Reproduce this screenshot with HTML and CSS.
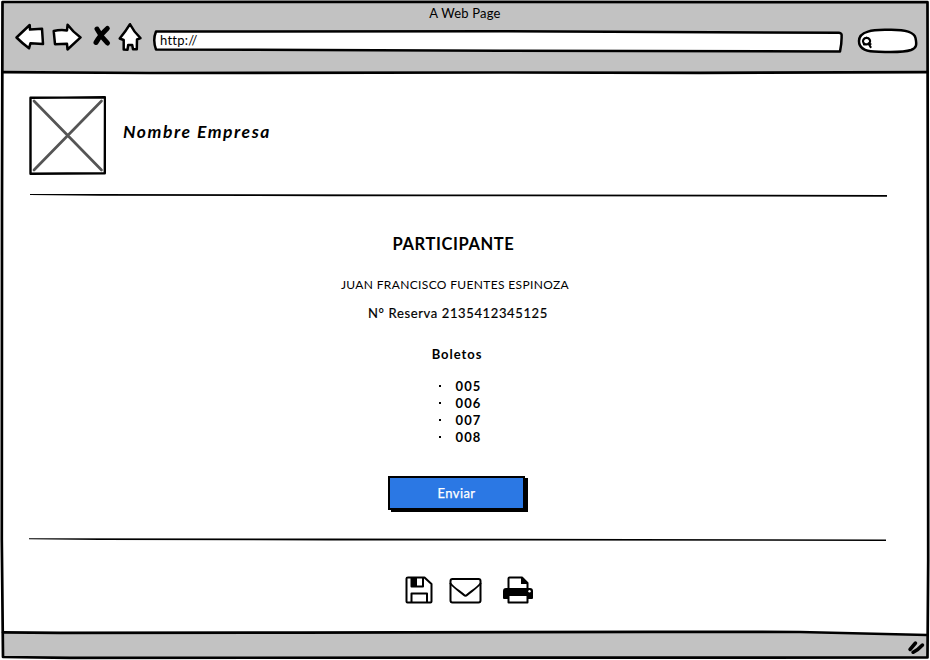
FILE: index.html
```html
<!DOCTYPE html>
<html lang="es">
<head>
<meta charset="utf-8">
<title>A Web Page</title>
<link rel="stylesheet" href="styles.css">
</head>
<body>
<div class="browser">
  <header class="chrome">
    <div class="title"><span>A Web Page</span></div>
    <div class="toolbar">
      <svg class="tool back" width="32" height="32" viewBox="14 22 32 32"><path d="M16.5 37.5 29.7 25 30 29.6 42 28.7 43 44 30.5 43.2 29 48.3Q22 43 16.5 37.5Z"/></svg>
      <svg class="tool forward" width="32" height="32" viewBox="51 22 32 32"><path d="M53.7 31Q60 29.5 67 30.4L67.6 24.7Q73 32 80.6 37.4L67.5 49.5 67 43.8 55 44.2Z"/></svg>
      <svg class="tool stop" width="20" height="32" viewBox="92 22 20 32"><path class="cross" d="M97 29Q101 37 107.5 43M107.3 28.5Q100 35 96 42.5"/></svg>
      <svg class="tool home" width="26" height="32" viewBox="117 22 26 32"><path d="M130 24.2Q134 32 140.5 38.2L137 39.5 136.8 49.2 133 49.2 132.2 45 128.2 45 127.5 49.8 123.7 49.5 123.7 40 119.7 38.5Q126 31 130 24.2Z"/></svg>
      <div class="url">
        <svg class="shape" width="692" height="32" viewBox="152 22 692 32"><path d="M156 31.6 500 31.2 839 32.8Q842 33 841.6 36Q841.8 43 840 51.5L500 50.7 156 49.5Q152.500 40 156 31.600Z"/></svg>
        <span>http://</span>
      </div>
      <svg class="tool search" width="64" height="32" viewBox="855 22 64 32"><path d="M859 41C859 29 879 30.200 889 29.700C901 29.500 914 31 915.500 38C917 45 916.500 48 911 50C902 53 888 52 874 51.500C864 51 859 47 859 41Z"/><path class="lens" d="M866.500 37.900a3.600 3.300 0 1 0 .1 0M868.500 43.500 870.600 47M864 44.400 870.500 44"/></svg>
    </div>
  </header>
  <main class="page">
    <div class="brand">
      <svg class="logo" width="78" height="80" viewBox="28 95 78 80"><path class="box" d="M30.500 97.700 63 97.600 105 97.300 104.800 173.300 30.500 173.700Z"/><path class="diagonals" d="M34 101 101.500 170M101.500 101 34 170"/></svg>
      <h1>Nombre Empresa</h1>
    </div>
    <svg class="rule first" width="858" height="4" viewBox="0 0 858 4"><path d="M0 1 40 1 65 1.100 400 1.500 857 2 857 3.700 300 3.200 70 2.700 0 1.900Z"/></svg>
    <h2>PARTICIPANTE</h2>
    <p class="name">JUAN FRANCISCO FUENTES ESPINOZA</p>
    <p class="booking">N° Reserva 2135412345125</p>
    <h3>Boletos</h3>
    <ul class="tickets">
      <li>005</li>
      <li>006</li>
      <li>007</li>
      <li>008</li>
    </ul>
    <button class="send">Enviar</button>
    <svg class="rule second" width="858" height="4" viewBox="0 0 858 4"><path d="M0 .3 300 .5 857 1.600 857 3 300 2.400 70 1.900 0 1.200Z"/></svg>
    <div class="actions">
      <svg class="save" width="28" height="28" viewBox="0 0 28 28"><path d="M3 1.500H19.500L26.500 8V25.500Q26.500 26.500 25.500 26.500H2.500Q1.500 26.500 1.500 25.500V2.500Q1.500 1.500 3 1.500ZM6.500 1.500V10.500H18V1.500M6.500 26.500V17.500H22V26.500"/><path class="solid" d="M6.500 2H12V10.500H6.500Z"/></svg>
      <svg class="mail" width="33" height="28" viewBox="0 0 33 28"><rect x="1.500" y="3" width="30" height="23.500" rx="2"/><path d="M1.500 7.500C5 12 12 16 15 19Q16.500 20.500 18 19C21 16 28 12 31.500 7.500"/></svg>
      <svg class="print" width="30" height="28" viewBox="0 0 30 28"><path class="solid" d="M3 12H27Q30 12 30 15V22Q30 23 29 23H25V20H5V23H1Q0 23 0 22V15Q0 12 3 12Z"/><path d="M5.500 13V2.500Q5.500 1.500 6.500 1.500H19L24.500 7V13M5.500 20V26.500H24.500V20"/><path class="solid" d="M18 1V8H25Z"/><circle class="light" cx="26.500" cy="15.300" r="1.200"/></svg>
    </div>
  </main>
  <footer class="status"></footer>
  <svg class="frame" width="930" height="660" viewBox="0 0 930 660">
    <path class="outside" d="M0 0H930V660H0ZM2 1.500V657L927.500 657.500V1.500Z"/>
    <path class="bar" d="M2 632.500 300 632.500 650 631.800 840 632.500 927 635V657H2Z"/>
    <path class="line" d="M2.500 2Q200 2.500 500 1.800L927.500 2.200 928 300 928.200 560 927.500 657.500 700 657.600Q300 656.500 70 657.800L3 657 1.800 540 2 200Z"/>
    <path class="line" d="M3 72.200 150 73 500 72.500 700 72.800 927 72.200M3 632.300 60 632.800 300 632.600 650 631.800 800 632 927 635"/>
    <path class="grip" d="M910 649.500 915.500 643M913 652.300Q918 650 922.500 645"/>
  </svg>
</div>
</body>
</html>
```
FILE: styles.css
```css
* { box-sizing: border-box; }
body {
  margin: 0;
  background: #fff;
  color: #000;
  font-family: Lato, "Open Sans", sans-serif;
}
h1, h2, h3, p, ul { margin: 0; padding: 0; }
svg { display: block; flex: none; fill: none; stroke: #000; stroke-linejoin: round; stroke-linecap: round; }
.browser {
  position: relative;
  display: flex;
  flex-direction: column;
  width: 930px;
  height: 660px;
  overflow: hidden;
}
.chrome { flex: none; height: 72px; background: #c2c2c2; }
.title {
  height: 22px;
  padding-top: 5px;
  text-align: center;
  font-size: 13px;
  line-height: 16px;
  letter-spacing: .2px;
}
.toolbar { display: flex; padding-left: 14px; }
.tool, .shape { fill: #fff; stroke-width: 2.5; }
.forward { margin-left: 5px; }
.stop { margin-left: 9px; }
.stop .cross { fill: none; stroke-width: 5; }
.home { margin-left: 5px; }
.url { display: grid; margin-left: 9px; }
.url > * { grid-area: 1 / 1; }
.url span { z-index: 1; padding: 10px 0 0 8px; font-size: 13px; line-height: 16px; letter-spacing: .25px; }
.search { margin-left: 11px; }
.lens { stroke-width: 2.2; }
.page { flex: 1; display: flex; flex-direction: column; align-items: center; }
.brand { align-self: flex-start; display: flex; margin: 23px 0 0 28px; }
.box { stroke-width: 2.4; }
.diagonals { stroke: #555; stroke-width: 2.7; }
h1 { margin: 26px 0 0 17px; font-size: 17.500px; line-height: 22px; font-style: italic; letter-spacing: 1.55px; white-space: nowrap; }
.rule { align-self: flex-start; margin-left: 30px; fill: #000; stroke: none; }
.first { margin-top: 18px; }
.second { margin: 28px 0 0 29px; }
h2 { margin: 37px 0 0 -23px; font-size: 16.500px; line-height: 20px; letter-spacing: .6px; }
.name { margin: 23px 0 0 -20px; font-size: 12px; line-height: 16px; letter-spacing: .35px; }
.booking { margin: 11px 0 0 -14px; font-size: 13px; line-height: 18px; letter-spacing: .63px; -webkit-text-stroke: .2px #000; }
h3 { margin: 23px 0 0 -16px; font-size: 13px; line-height: 18px; letter-spacing: .95px; }
.tickets { list-style: none; margin: 15px 0 0 -10px; font-size: 13px; font-weight: 700; line-height: 17px; letter-spacing: 1.1px; }
.tickets li { display: flex; align-items: center; }
.tickets li::before { content: ""; width: 2px; height: 2px; margin: -1px 15px 0 0; background: #000; }
.send {
  width: 137px;
  height: 34px;
  margin: 30px 0 0 -17px;
  padding: 0;
  border: 2px solid #000;
  background: #2b78e4;
  box-shadow: 3px 2px 0 #000;
  color: #fff;
  font: 13px/20px Lato, sans-serif;
  letter-spacing: .4px;
  -webkit-text-stroke: .25px #fff;
}
.actions { display: flex; margin: 34px 0 0 7px; }
.actions svg { stroke-width: 2; }
.mail { margin-left: 16px; }
.print { margin-left: 21px; }
.actions .solid { fill: #000; stroke: none; }
.light { fill: #fff; stroke: none; }
.status { flex: none; height: 28px; }
.frame { position: absolute; inset: 0; pointer-events: none; }
.outside { fill: #fff; fill-rule: evenodd; stroke: none; }
.bar { fill: #c2c2c2; stroke: none; }
.line { stroke-width: 2.7; }
.grip { stroke-width: 3.5; }
```
